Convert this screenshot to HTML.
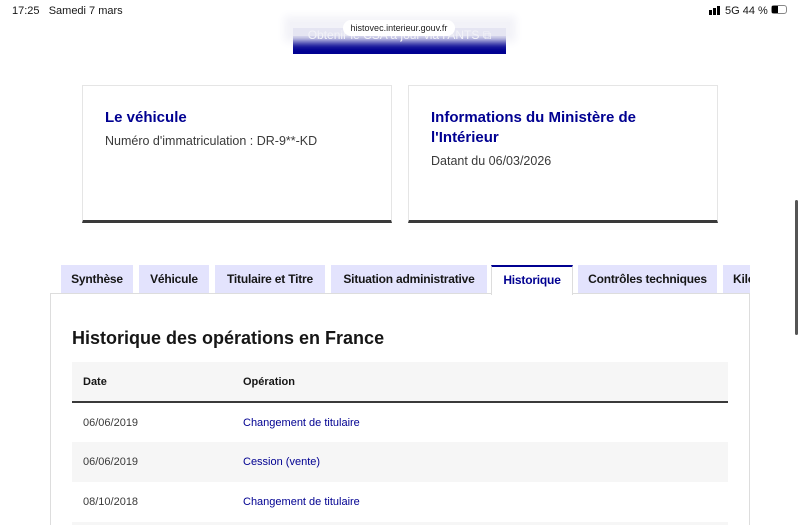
<!DOCTYPE html>
<html><head><meta charset="utf-8"><style>
*{margin:0;padding:0;box-sizing:border-box}
html,body{width:800px;height:525px;overflow:hidden}
body{background:#fff;font-family:"Liberation Sans",sans-serif;position:relative;color:#161616}
.abs{position:absolute}
.card{position:absolute;top:85px;height:138px;border:1px solid #e5e5e5;border-bottom:3px solid #3a3a3a;background:#fff}
.card h2{position:absolute;left:22px;top:22px;font-size:15px;color:#000091;font-weight:bold;line-height:20px}
.card p{font-size:12.5px;color:#3a3a3a}
.tab{position:absolute;top:265px;height:28px;background:#e3e3fd;font-size:12px;font-weight:bold;color:#161616;text-align:center;line-height:28px;white-space:nowrap;overflow:hidden;letter-spacing:-0.2px}
.row{position:absolute;left:72px;width:656px;height:40px;font-size:11px;line-height:40px}
.row span{position:absolute}
</style></head><body>
<div class="abs" style="left:12px;top:5px;font-size:11px">17:25&nbsp;&nbsp; Samedi 7 mars</div>
<div class="abs" style="left:725px;top:5px;font-size:11px">5G 44 %</div>
<div class="abs" style="left:709px;top:10px;width:3px;height:5px;background:#000"></div>
<div class="abs" style="left:713px;top:8px;width:3px;height:7px;background:#000"></div>
<div class="abs" style="left:717px;top:6px;width:3px;height:9px;background:#000"></div>
<div class="abs" style="left:771px;top:5px;width:16px;height:9px;border:1px solid #888;border-radius:3px"><div style="width:6px;height:7px;background:#000"></div></div>
<div class="abs" style="left:293px;top:28px;width:213px;height:26px;background:#000091;color:#fff;font-size:12px;text-align:center;line-height:26px;overflow:hidden"><span style="position:relative;top:-6px">Obtenir le CSA à jour via l'ANTS ⧉</span></div>
<div class="abs" style="left:290px;top:22px;width:220px;height:14px;background:#f2f2f8;box-shadow:0 0 8px 6px #f2f2f8;opacity:0.95"></div>
<div class="abs" style="left:343px;top:20px;width:112px;height:16px;background:#fff;border-radius:8px;font-size:9px;line-height:16px;text-align:center;color:#222">histovec.interieur.gouv.fr</div>

<div class="card" style="left:82px;width:310px"><h2>Le véhicule</h2><p class="abs" style="left:22px;top:48px">Numéro d'immatriculation : DR-9**-KD</p></div>
<div class="card" style="left:408px;width:310px"><h2>Informations du Ministère de<br>l'Intérieur</h2><p class="abs" style="left:22px;top:68px">Datant du 06/03/2026</p></div>

<div class="tab" style="left:61px;width:72px">Synthèse</div>
<div class="tab" style="left:139px;width:70px">Véhicule</div>
<div class="tab" style="left:215px;width:110px">Titulaire et Titre</div>
<div class="tab" style="left:331px;width:156px">Situation administrative</div>
<div class="tab" style="left:491px;width:82px;top:265px;height:30px;background:#fff;border:1px solid #ddd;border-top:2px solid #000091;border-bottom:none;color:#000091;line-height:27px;z-index:2">Historique</div>
<div class="tab" style="left:578px;width:139px">Contrôles techniques</div>
<div class="tab" style="left:723px;width:27px;text-align:left;padding-left:10px">Kilométrage</div>
<div class="abs" style="left:50px;top:293px;width:700px;height:232px;border:1px solid #ddd;border-bottom:none"></div>

<div class="abs" style="left:72px;top:328px;font-size:18px;font-weight:bold;color:#161616">Historique des opérations en France</div>
<div class="row" style="top:362px;background:#f6f6f6;border-bottom:2px solid #3a3a3a;font-weight:bold;height:41px"><span style="left:11px">Date</span><span style="left:171px">Opération</span></div>
<div class="row" style="top:403px"><span style="left:11px;color:#3a3a3a">06/06/2019</span><span style="left:171px;color:#000091">Changement de titulaire</span></div>
<div class="row" style="top:442px;background:#f6f6f6"><span style="left:11px;color:#3a3a3a">06/06/2019</span><span style="left:171px;color:#000091">Cession (vente)</span></div>
<div class="row" style="top:482px"><span style="left:11px;color:#3a3a3a">08/10/2018</span><span style="left:171px;color:#000091">Changement de titulaire</span></div>
<div class="row" style="top:522px;height:3px;background:#f6f6f6"></div>
<div class="abs" style="left:795px;top:200px;width:3px;height:135px;background:#555;border-radius:2px"></div>
</body></html>
